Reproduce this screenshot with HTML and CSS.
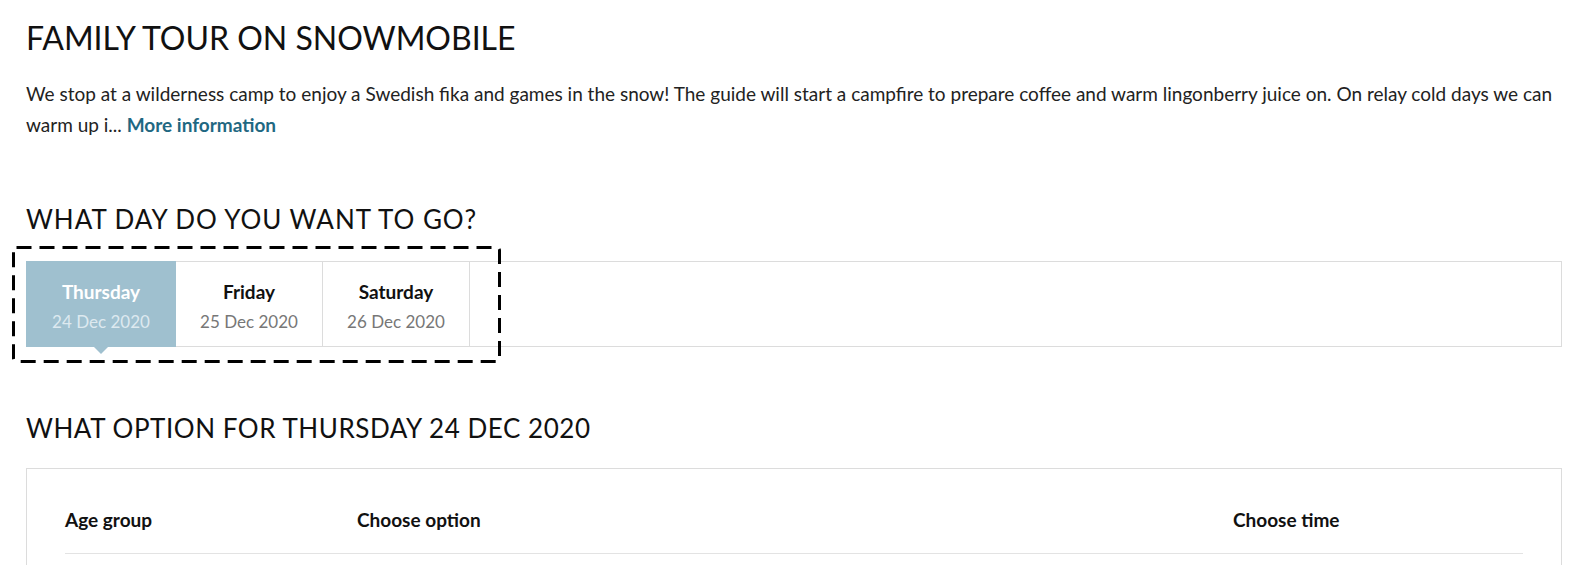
FILE: index.html
```html
<!DOCTYPE html>
<html>
	<head>
		<meta charset="utf-8">
		<title>Family tour on snowmobile</title>
		<link rel="stylesheet" href="styles.css">
	</head>
	<body>
		<div class="page">
			<h1 class="title">FAMILY TOUR ON SNOWMOBILE</h1>
			<p class="intro">We stop at a wilderness camp to enjoy a Swedish fika and games in the snow! The guide will start a campfire to prepare coffee and warm lingonberry juice on. On relay cold days we can warm up i... <a href="#" class="more">More information</a></p>

			<h2 class="section-title days-title">WHAT DAY DO YOU WANT TO GO?</h2>
			<div class="days">
				<!-- focus ring round the tabs -->
				<svg class="focus-ring" width="489" height="117" viewBox="0 0 489 117">
					<rect x="1.5" y="1.5" width="486" height="114" rx="3" ry="3" fill="none" stroke="#000" stroke-width="3" stroke-dasharray="15 8" />
				</svg>
				<div class="day active">
					<div class="day-name">Thursday</div>
					<div class="day-date">24 Dec 2020</div>
				</div>
				<div class="day">
					<div class="day-name">Friday</div>
					<div class="day-date">25 Dec 2020</div>
				</div>
				<div class="day">
					<div class="day-name">Saturday</div>
					<div class="day-date">26 Dec 2020</div>
				</div>
			</div>

			<h2 class="section-title options-title">WHAT OPTION FOR THURSDAY 24 DEC 2020</h2>
			<div class="options">
				<div class="options-head">
					<span>Age group</span>
					<span>Choose option</span>
					<span>Choose time</span>
				</div>
			</div>
		</div>
	</body>
</html>
```

FILE: styles.css
```css
body{
	margin: 0;
	background: #fff;
	color: #111;
	font-family: "Lato", "Open Sans", sans-serif;
}
.page{
	width: 1536px;
	padding-left: 26px;
	padding-top: 19px;
}
.title{
	margin: 0;
	font-size: 32px;
	line-height: 38px;
	font-weight: 400;
	color: #111;
}
.intro{
	margin: 21px 0 0 0;
	font-size: 19px;
	line-height: 31px;
	color: #222;
}
.more{
	color: #1f6882;
	font-weight: 700;
	text-decoration: none;
}
.section-title{
	margin: 0;
	font-size: 26px;
	line-height: 31px;
	font-weight: 400;
	color: #111;
}
.days-title{
	margin-top: 64px;
	letter-spacing: 0.95px;
}
.options-title{
	margin-top: 66px;
	letter-spacing: 0.55px;
}

/* day tabs */
.days{
	position: relative;
	display: flex;
	margin-top: 26px;
	height: 84px;
	border: 1px solid #dcdcdc;
}
.focus-ring{
	position: absolute;
	left: -15px;
	top: -16px;
	pointer-events: none;
}
.day{
	width: 147px;
	border-right: 1px solid #dcdcdc;
	text-align: center;
	padding-top: 16px;
	box-sizing: border-box;
}
.day-name{
	font-size: 19px;
	line-height: 28px;
	font-weight: 700;
	color: #111;
}
.day-date{
	margin-top: 2px;
	font-size: 17px;
	line-height: 28px;
	color: #777;
}
.day.active{
	position: relative;
	width: 150px;
	margin: -1px 0 -1px -1px;
	padding-top: 17px;
	background: #9fc0cf;
	border-right: 0;
}
.day.active .day-name{
	color: #fff;
}
.day.active .day-date{
	color: #dde9ef;
}
.day.active:after{
	content: "";
	position: absolute;
	left: 68px;
	bottom: -7px;
	border-left: 7px solid transparent;
	border-right: 7px solid transparent;
	border-top: 7px solid #9fc0cf;
}

/* options table */
.options{
	margin-top: 24px;
	border: 1px solid #dcdcdc;
	padding: 38px 38px 0 38px;
	height: 200px;
}
.options-head{
	display: grid;
	grid-template-columns: 292px 876px 1fr;
	font-size: 19px;
	line-height: 26px;
	font-weight: 700;
	color: #111;
	padding-bottom: 20px;
	border-bottom: 1px solid #e3e3e3;
}
```
